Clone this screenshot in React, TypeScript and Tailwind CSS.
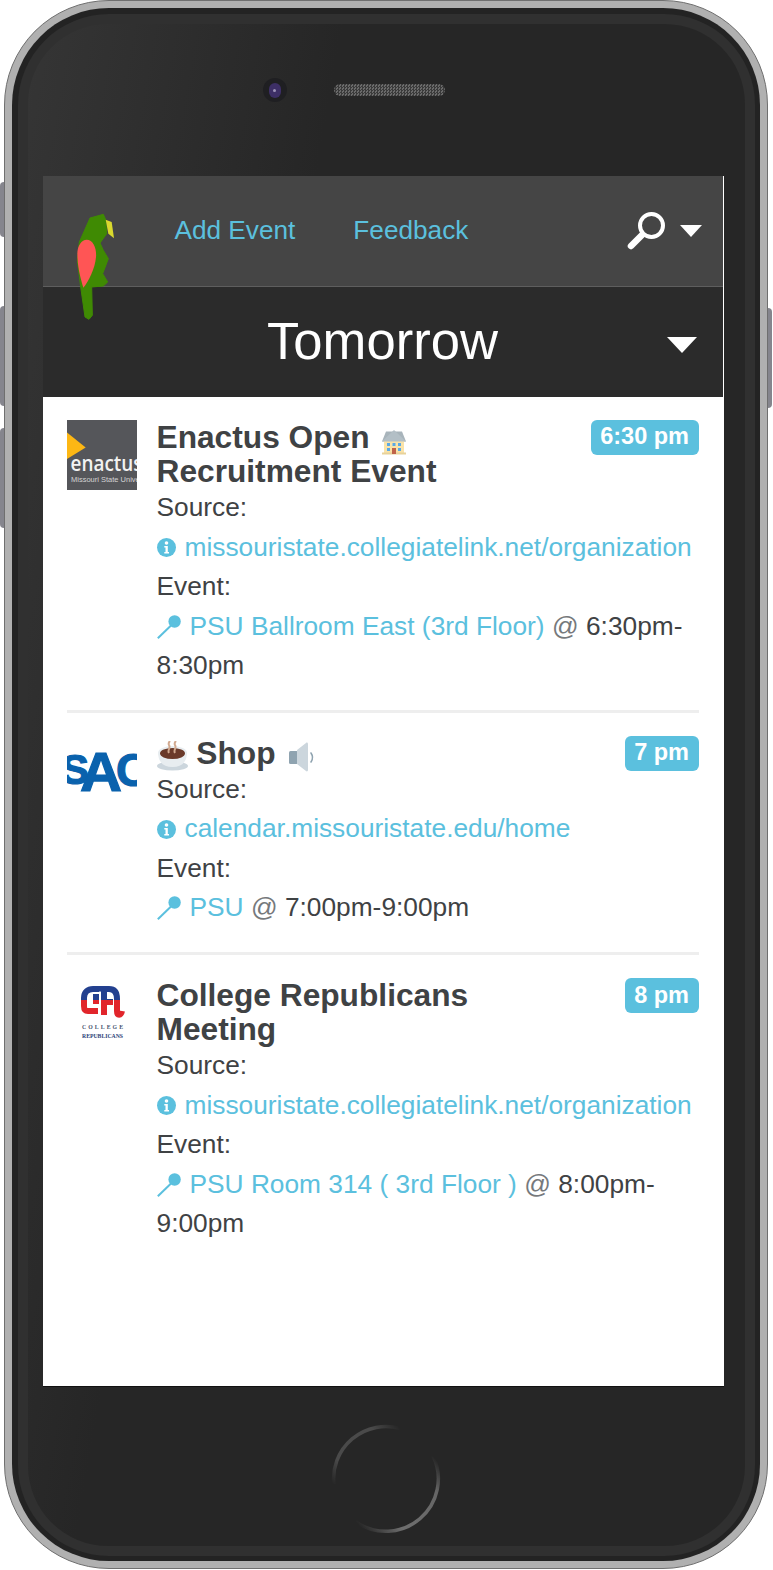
const FONT = "font-['Liberation_Sans',Arial,sans-serif]";

function House() {
  return (
    <svg viewBox="0 0 26 26" className="inline-block w-[26px] h-[26px] align-[-3px] -my-1 ml-[3px]">
      <path d="M5 2.500h16l4 10H1z" fill="#a8b4bb" />
      <rect x="3" y="11" width="20" height="14" fill="#fae3a8" />
      <rect x="1" y="23.500" width="24" height="2" fill="#e8d29a" />
      <path d="M13 1 1 12.500h24z" fill="#b3bfc6" />
      <rect x="6" y="14" width="3" height="3" fill="#5aa9e6" />
      <rect x="11.500" y="14" width="3" height="3" fill="#5aa9e6" />
      <rect x="17" y="14" width="3" height="3" fill="#5aa9e6" />
      <rect x="6" y="19" width="3" height="3" fill="#5aa9e6" />
      <rect x="17" y="19" width="3" height="3" fill="#5aa9e6" />
      <rect x="11" y="19" width="4" height="6" fill="#c0634a" />
    </svg>
  );
}

function Coffee() {
  return (
    <svg viewBox="0 0 31 30" className="inline-block w-[31px] h-[30px] align-[-3px] -my-1">
      <ellipse cx="15.500" cy="25" rx="15.500" ry="4.500" fill="#ccd6dd" />
      <path d="M1 11h29c0 10-5 15-14.500 15S1 21 1 11z" fill="#e8edf0" />
      <ellipse cx="15.500" cy="12" rx="14.500" ry="7" fill="#e8edf0" />
      <ellipse cx="15.500" cy="12.500" rx="12.500" ry="5.500" fill="#6b3a2a" />
      <path d="M12 12c-2-3 2-5 0-8c-1-2 0-3 1-4M18 12c-2-3 2-5 0-8c-1-2 0-3 1-4" fill="none" stroke="#d2a98f" strokeWidth="2" />
    </svg>
  );
}

function Speaker() {
  return (
    <svg viewBox="0 0 26 30" className="inline-block w-[26px] h-[30px] align-[-4px] -my-1 ml-[5px]">
      <rect x="0" y="9" width="9" height="13" rx="1.500" fill="#8fa3b0" />
      <path d="M8 8 17 1c1-1 2 0 2 1v26c0 1-1 2-2 1L8 22z" fill="#ccd6dd" />
      <path d="M22 11c2 3 2 6 0 9" fill="none" stroke="#8fa3b0" strokeWidth="1.600" strokeLinecap="round" />
    </svg>
  );
}

function Info() {
  return (
    <svg viewBox="0 0 19 19" className="w-[19px] h-[19px] shrink-0">
      <circle cx="9.500" cy="9.500" r="9.500" fill="#5bc0de" />
      <circle cx="9.500" cy="5" r="1.800" fill="#fff" />
      <path d="M7.300 8h3.500v6h1.200v1.500H7.300V14h1.200V9.500H7.300z" fill="#fff" />
    </svg>
  );
}

function Pin() {
  return (
    <svg viewBox="0 0 24 24" className="inline-block w-[24px] h-[24px] align-[-4px] mr-[9px]">
      <circle cx="17.600" cy="6.500" r="6.200" fill="#5bc0de" />
      <path d="M14 10.500 0.800 23.300" stroke="#5bc0de" strokeWidth="2" />
    </svg>
  );
}

function EnactusLogo() {
  return (
    <svg viewBox="0 0 70 70" className="w-[70px] h-[70px] block">
      <rect width="70" height="70" fill="#55565a" />
      <path d="M0 12.500 18.700 27.500 0 39z" fill="#fdb714" />
      <text x="3.500" y="51" fill="#f2f2f2" fontSize="22" fontWeight="600" fontFamily="'Open Sans',sans-serif" textLength="72" lengthAdjust="spacingAndGlyphs">enactus</text>
      <text x="4" y="62" fill="#d4d4d4" fontSize="7.500" fontFamily="'Liberation Sans',sans-serif">Missouri State University</text>
    </svg>
  );
}

function SacLogo() {
  return (
    <svg viewBox="0 0 70 70" className="w-[70px] h-[70px] block">
      <g fill="#0a62ad" stroke="#0a62ad" strokeWidth="1.200" fontWeight="700" fontFamily="'Liberation Sans',sans-serif">
        <text x="-6" y="48" fontSize="42">S</text>
        <text x="13" y="55" fontSize="56" textLength="42" lengthAdjust="spacingAndGlyphs">A</text>
        <text x="49" y="50" fontSize="46">C</text>
      </g>
    </svg>
  );
}

function RepublicanLogo() {
  const d = "M31 33H21C18 33 17 31 17 28V20C17 14 21 11 26 11H42C48 11 50 15 50 21V33C50 38 54 38 55 33M37 11V37M37 24H46";
  return (
    <svg viewBox="0 0 70 70" className="w-[70px] h-[70px] block">
      <defs>
        <clipPath id="rep-top"><rect x="0" y="0" width="70" height="22" /></clipPath>
        <clipPath id="rep-bottom"><rect x="0" y="22" width="70" height="30" /></clipPath>
      </defs>
      <path d={d} fill="none" stroke="#23408f" strokeWidth="6" clipPath="url(#rep-top)" />
      <path d={d} fill="none" stroke="#e1252b" strokeWidth="6" clipPath="url(#rep-bottom)" />
      <rect x="26" y="16" width="6" height="6" fill="#23408f" />
      <rect x="26" y="22" width="6" height="4" fill="#e1252b" />
      <circle cx="33" cy="14" r="0.800" fill="#fff" />
      <circle cx="33" cy="18" r="0.800" fill="#fff" />
      <circle cx="33" cy="22" r="0.800" fill="#fff" />
      <text x="15" y="51" fill="#46526e" fontSize="5.800" fontWeight="700" textLength="41" fontFamily="'Liberation Serif',serif">COLLEGE</text>
      <text x="15" y="60" fill="#2c3f78" fontSize="5.600" fontWeight="700" textLength="41" lengthAdjust="spacingAndGlyphs" fontFamily="'Liberation Serif',serif">REPUBLICANS</text>
    </svg>
  );
}

function Parrot() {
  return (
    <svg viewBox="105 125 125 330" className="absolute left-[32px] top-[36px] w-[41.700px] h-[110px]">
      <path d="M150 143 190 132 197 148 200 190 180 218 190 240 205 265 188 310 203 335 190 347 155 350 157 435 147 447 135 440 122 350 112 270 118 215z" fill="#3f8a03" stroke="#3f8a03" strokeWidth="3" strokeLinejoin="round" />
      <path d="M197 148 215 155 222 204 205 190z" fill="#d9d92e" />
      <path d="M140 208C160 208 170 235 168 260 165 295 145 335 130 352 120 320 112 285 112 250 112 225 125 208 140 208z" fill="#ff5555" />
    </svg>
  );
}

function Ring() {
  return (
    <svg viewBox="0 0 110 110" className="w-[110px] h-[110px] absolute left-[303px] bottom-[12px]">
      <defs>
        <linearGradient id="ring-a" gradientUnits="userSpaceOnUse" x1="2" y1="60" x2="69" y2="4">
          <stop offset="0" stopColor="#4a4a4a" stopOpacity="0" />
          <stop offset="0.220" stopColor="#4a4a4a" />
          <stop offset="0.750" stopColor="#4a4a4a" />
          <stop offset="1" stopColor="#4a4a4a" stopOpacity="0" />
        </linearGradient>
        <linearGradient id="ring-b" gradientUnits="userSpaceOnUse" x1="25" y1="98" x2="102" y2="32">
          <stop offset="0" stopColor="#6e6e6e" stopOpacity="0" />
          <stop offset="0.300" stopColor="#6e6e6e" />
          <stop offset="0.800" stopColor="#666" />
          <stop offset="1" stopColor="#666" stopOpacity="0" />
        </linearGradient>
      </defs>
      <path d="M2.800 60.100A52.500 52.500 0 0 1 68.700 4.300" fill="none" stroke="url(#ring-a)" strokeWidth="3.500" />
      <path d="M102.100 32A52.500 52.500 0 0 1 24.800 97.900" fill="none" stroke="url(#ring-b)" strokeWidth="3.500" />
    </svg>
  );
}

type Ev = {
  logo: React.ReactNode;
  title: React.ReactNode;
  time: string;
  url: string;
  place: string;
  hours: string;
};

const events: Ev[] = [
  {
    logo: <EnactusLogo />,
    title: <>Enactus Open <House /> Recruitment Event</>,
    time: "6:30 pm",
    url: "missouristate.collegiatelink.net/organization",
    place: "PSU Ballroom East (3rd Floor)",
    hours: "6:30pm-8:30pm",
  },
  {
    logo: <SacLogo />,
    title: <><Coffee /> Shop <Speaker /></>,
    time: "7 pm",
    url: "calendar.missouristate.edu/home",
    place: "PSU",
    hours: "7:00pm-9:00pm",
  },
  {
    logo: <RepublicanLogo />,
    title: <>College Republicans Meeting</>,
    time: "8 pm",
    url: "missouristate.collegiatelink.net/organization",
    place: "PSU Room 314 ( 3rd Floor )",
    hours: "8:00pm-9:00pm",
  },
];

function EventRow({ e, last }: { e: Ev; last: boolean }) {
  return (
    <div className={last ? "flex gap-5 pt-[23px]" : "flex gap-5 pt-[23px] pb-[24px] border-b-[3px] border-[#eeeeee]"}>
      <div className="w-[70px] shrink-0">{e.logo}</div>
      <div className="flex-1 min-w-0 text-[26.300px] leading-[39.500px] text-[#3f4244]">
        <div className="flex justify-between items-start">
          <div className="w-[420px] text-[31.700px] leading-[34.250px] font-bold">{e.title}</div>
          <span className="rounded-md bg-[#5bc0de] px-[9.500px] h-[35px] -mb-[1px] flex items-center text-white font-bold text-[23.500px] leading-none">{e.time}</span>
        </div>
        <div>Source:</div>
        <a className="flex items-center gap-[9px] text-[#5bc0de] whitespace-nowrap"><Info />{e.url}</a>
        <div>Event:</div>
        <div><Pin /><a className="text-[#5bc0de]">{e.place}</a> <span className="text-[#76797c]">@</span> {e.hours}</div>
      </div>
    </div>
  );
}

function Caret({ big }: { big?: boolean }) {
  return big ? (
    <div className="w-0 h-0 border-x-[15px] border-t-[16px] border-x-transparent border-t-white" />
  ) : (
    <div className="w-0 h-0 border-x-[11.500px] border-t-[12px] border-x-transparent border-t-white" />
  );
}

export default function App() {
  return (
    <div className={`relative w-[773px] h-[1570px] bg-white ${FONT}`}>
      <div className="absolute left-0 top-[182px] w-[6px] h-[55px] rounded-l bg-[#85858d]" />
      <div className="absolute left-0 top-[306px] w-[6px] h-[100px] rounded-l bg-[#85858d]" />
      <div className="absolute left-0 top-[428px] w-[6px] h-[100px] rounded-l bg-[#85858d]" />
      <div className="absolute left-[766px] top-[308px] w-[6px] h-[100px] rounded-r bg-[#85858d]" />
      <div className="relative ml-1 w-[764px] h-[1569px] rounded-[105px] border border-[#6f6f6f] bg-[#b0b0b0] p-[7px]">
        <div className="h-full rounded-[97px] bg-[#232323] p-[5.500px]">
          <div className="h-full rounded-[91px] bg-[#303030] p-[10px]">
            <div className="relative h-full rounded-[80px] bg-linear-[100deg,#353535_0%,#262626_32%] pl-[15px] pr-[20px] flex flex-col">
              <div className="h-[152px] shrink-0 relative flex items-center justify-center gap-[47px] pb-[19px]">
                <div className="w-[24px] h-[24px] rounded-full bg-[#1f1f22] flex items-center justify-center -ml-[60px]">
                  <div className="w-[12px] h-[15px] rounded-full bg-[#3d2f66] flex items-center justify-center">
                    <div className="w-[3px] h-[3px] rounded-full bg-[#9d93b8]" />
                  </div>
                </div>
                <div className="w-[111px] h-[12px] rounded-full bg-[repeating-conic-gradient(#3a3a3a_0_25%,#6a6a6a_0_50%)] bg-size-[3px_3px]" />
              </div>
              <div className="relative h-[1211px] w-[681px] shrink-0 bg-white border-b border-[#111]">
                <div className="w-[680px] h-[111px] bg-[#454545] border-b border-[#5e5e5e] flex items-center pl-[132px] text-[26.200px] text-[#5bc0de]">
                  <a>Add Event</a>
                  <a className="ml-[58px]">Feedback</a>
                  <div className="ml-auto mr-[21px] flex items-center gap-[13px]">
                    <svg viewBox="0 0 40 40" className="w-[40px] h-[40px]">
                      <circle cx="24.500" cy="14.500" r="11.500" fill="none" stroke="#fff" strokeWidth="4" />
                      <path d="M15 24 4 35" stroke="#fff" strokeWidth="6.500" strokeLinecap="round" />
                    </svg>
                    <Caret />
                  </div>
                </div>
                <div className="w-[680px] h-[110px] bg-[#2b2b2b] grid grid-cols-[1fr_auto_1fr] items-center text-white text-[52.600px] leading-none">
                  <div />
                  <div>Tomorrow</div>
                  <div className="justify-self-end mr-[26px] mt-[6px]"><Caret big /></div>
                </div>
                <Parrot />
                <div className="pl-6 pr-[24px] w-[680px]">
                  {events.map((e, i) => (
                    <EventRow key={e.time} e={e} last={i === events.length - 1} />
                  ))}
                </div>
              </div>
              <Ring />
            </div>
          </div>
        </div>
      </div>
    </div>
  );
}
